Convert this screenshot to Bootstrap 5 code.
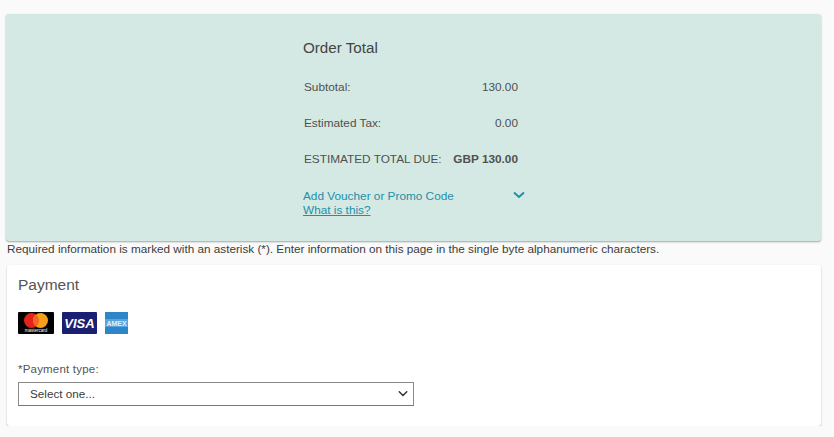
<!DOCTYPE html>
<html lang="en">
<head>
  <meta charset="UTF-8" />
  <meta name="viewport" content="width=device-width, initial-scale=1.0" />
  <title>Payment</title>
  <link href="https://cdn.jsdelivr.net/npm/bootstrap@5.3.0/dist/css/bootstrap.min.css" rel="stylesheet">
  <style>
    body {
      font-family: "Liberation Sans", Arial, sans-serif;
      background-color: #fafafa;
      color: #505050;
      font-size: 11.8px;
    }

    .page-wrap {
      padding: 14px 13px 0 6px;
    }

    .order-panel {
      background-color: #d4e9e3;
      height: 227px;
      border-radius: 3px;
      box-shadow: 0 1px 2px rgba(0, 0, 0, 0.35);
      padding: 25px 0 0 297px;
    }

    .order-inner {
      width: 222px;
    }

    .order-title {
      font-size: 15.2px;
      font-weight: 400;
      line-height: 18px;
      color: #444;
      margin: 0 0 23px;
    }

    .order-row {
      display: flex;
      justify-content: space-between;
      width: 215px;
      padding-left: 1px;
      line-height: 14px;
      margin-bottom: 22px;
    }

    .order-row.total-row {
      margin-bottom: 23px;
    }

    .promo-link {
      color: #1f8fa8;
      line-height: 14px;
    }

    .promo-link a {
      color: #1f8fa8;
    }

    .promo-chevron {
      margin-top: 2px;
    }

    .required-note {
      font-size: 11.74px;
      line-height: 14px;
      color: #3c3c3c;
      margin: 1px 0 9px 1px;
    }

    .payment-panel {
      background-color: #fff;
      height: 161px;
      margin-left: 1px;
      border-radius: 3px;
      box-shadow: 0 1px 2px rgba(0, 0, 0, 0.28);
      padding: 11px 12px 0 11px;
    }

    .payment-title {
      font-size: 15.5px;
      font-weight: 400;
      line-height: 18px;
      color: #555;
      margin: 0 0 18px;
    }

    .card-logos {
      gap: 8px;
      margin-bottom: 28px;
    }

    .pay-label {
      font-size: 11.5px;
      line-height: 14px;
      letter-spacing: .2px;
      margin: 0 0 6px;
      display: block;
      color: #555;
    }

    .pay-select {
      width: 396px;
      height: 24px;
      min-height: 24px;
      padding: 0 36px 0 11px;
      font-size: 11.7px;
      line-height: 22px;
      color: #3c3c3c;
      border: 1px solid #8a8a8a;
      border-bottom-color: #777;
      border-radius: 0;
      background-position: right 3px center;
      background-size: 14px 12px;
      background-image: url("data:image/svg+xml,%3csvg xmlns='http://www.w3.org/2000/svg' viewBox='0 0 16 16'%3e%3cpath fill='none' stroke='%23333' stroke-linecap='round' stroke-width='2' d='M3 5l5 5 5-5'/%3e%3c/svg%3e");
    }
  </style>
</head>
<body>
  <div class="page-wrap">
    <div class="order-panel">
      <div class="order-inner">
        <h2 class="order-title">Order Total</h2>
        <div class="order-row"><span>Subtotal:</span><span>130.00</span></div>
        <div class="order-row"><span>Estimated Tax:</span><span>0.00</span></div>
        <div class="order-row total-row"><span>ESTIMATED TOTAL DUE:</span><strong>GBP 130.00</strong></div>
        <div class="promo-link d-flex justify-content-between">
          <span>Add Voucher or Promo Code</span>
          <svg class="promo-chevron" width="12" height="8" viewBox="0 0 12 8"><path d="M1 1.5l5 4.5 5-4.5" fill="none" stroke="#1f8fa8" stroke-width="2"/></svg>
        </div>
        <div class="promo-link"><a href="#">What is this?</a></div>
      </div>
    </div>

    <p class="required-note">Required information is marked with an asterisk (*). Enter information on this page in the single byte alphanumeric characters.</p>

    <div class="payment-panel">
      <h2 class="payment-title">Payment</h2>
      <div class="d-flex align-items-center card-logos">
        <svg width="36" height="22" viewBox="0 0 36 22">
          <rect width="36" height="22" rx="1" fill="#000"/>
          <circle cx="13.5" cy="8.5" r="7.5" fill="#e2231a"/>
          <circle cx="22.5" cy="8.5" r="7.5" fill="#f79e1b"/>
          <path d="M18 2.5a7.5 7.5 0 0 1 0 12a7.5 7.5 0 0 1 0-12z" fill="#f26522"/>
          <text x="18" y="20" font-size="4.5" fill="#fff" text-anchor="middle" font-family="Liberation Sans">mastercard</text>
        </svg>
        <svg width="35" height="22" viewBox="0 0 35 22">
          <rect width="35" height="22" rx="1" fill="#1a1f71"/>
          <text x="17.5" y="16" font-size="13" font-weight="700" font-style="italic" fill="#fff" text-anchor="middle" font-family="Liberation Sans">VISA</text>
        </svg>
        <svg width="23" height="22" viewBox="0 0 23 22">
          <rect width="23" height="22" fill="#2e86c8"/>
          <rect y="7" width="23" height="8" fill="#5aa5dc"/>
          <text x="11.5" y="13.5" font-size="7" font-weight="700" fill="#e4f0f9" text-anchor="middle" font-family="Liberation Sans">AMEX</text>
        </svg>
      </div>
      <label class="pay-label" for="payType">*Payment type:</label>
      <select id="payType" class="form-select pay-select">
        <option>Select one...</option>
      </select>
    </div>
  </div>

  <script src="https://cdn.jsdelivr.net/npm/bootstrap@5.3.0/dist/js/bootstrap.bundle.min.js"></script>
</body>
</html>
